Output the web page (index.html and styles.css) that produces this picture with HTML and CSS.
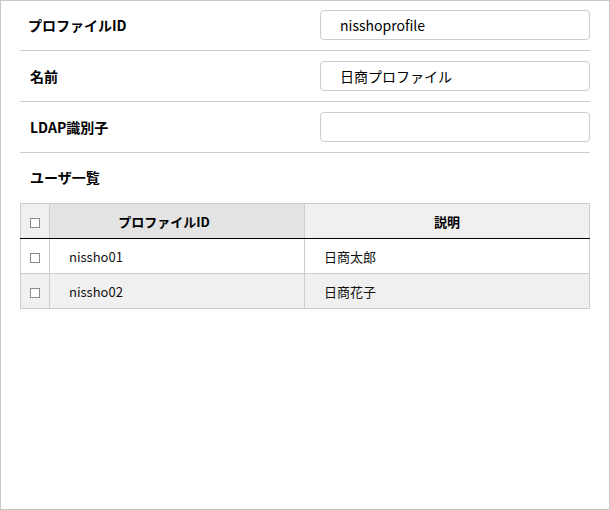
FILE: index.html
```html
<!DOCTYPE html>
<html lang="ja">
<head>
<meta charset="utf-8">
<link rel="stylesheet" href="styles.css">
</head>
<body>
<div class="panel">
  <div class="form">
    <div class="row">
      <div class="label">プロファイルID</div>
      <div class="field"><div class="input">nisshoprofile</div></div>
    </div>
    <div class="row">
      <div class="label">名前</div>
      <div class="field"><div class="input">日商プロファイル</div></div>
    </div>
    <div class="row">
      <div class="label">LDAP識別子</div>
      <div class="field"><div class="input"></div></div>
    </div>
  </div>
  <div class="section-title">ユーザ一覧</div>
  <table class="grid">
    <thead>
      <tr>
        <th class="col-check"><span class="cb"></span></th>
        <th class="col-id sorted">プロファイルID</th>
        <th class="col-desc">説明</th>
      </tr>
    </thead>
    <tbody>
      <tr>
        <td class="col-check"><span class="cb"></span></td>
        <td class="cell">nissho01</td>
        <td class="cell">日商太郎</td>
      </tr>
      <tr class="alt">
        <td class="col-check"><span class="cb"></span></td>
        <td class="cell">nissho02</td>
        <td class="cell">日商花子</td>
      </tr>
    </tbody>
  </table>
</div>
</body>
</html>
```

FILE: styles.css
```css
html, body {
  margin: 0;
  padding: 0;
  background: #fff;
}
body {
  font-family: "Noto Sans CJK JP", "DejaVu Sans", sans-serif;
  color: #000;
}
.panel {
  box-sizing: border-box;
  width: 610px;
  height: 510px;
  border: 1px solid #c8c8c8;
  padding: 0 19px;
}
.form {
  margin-top: -1px;
}
.row {
  display: flex;
  align-items: center;
  height: 50px;
  border-bottom: 1px solid #cccccc;
}
.label {
  flex: 0 0 300px;
  padding-left: 10px;
  font-size: 14px;
  font-weight: bold;
  box-sizing: border-box;
}
.row:first-child .label {
  padding-left: 8px;
}
.field {
  flex: 1;
}
.input {
  box-sizing: border-box;
  height: 30px;
  border: 1px solid #cccccc;
  border-radius: 4px;
  padding: 0 19px;
  font-size: 14px;
  line-height: 28px;
  color: #000;
}
.section-title {
  height: 50px;
  line-height: 49px;
  padding-left: 10px;
  font-size: 14px;
  font-weight: bold;
}
.grid {
  width: 570px;
  border-collapse: collapse;
  font-size: 13px;
  table-layout: fixed;
}
.grid th, .grid td {
  border: 1px solid #cccccc;
  height: 35px;
  padding: 0;
  box-sizing: border-box;
}
.grid thead th {
  background: #f0f0f0;
  border-bottom: 1px solid #000;
  font-weight: bold;
  text-align: center;
}
.grid thead th.sorted {
  background: #e3e3e3;
  padding-right: 26px;
}
.col-check {
  width: 29px;
  text-align: center;
}
.col-id {
  width: 255px;
}
.cell {
  padding-left: 19px !important;
  color: #111;
}
.grid tbody tr.alt td {
  background: #f0f0f0;
}
.cb {
  display: inline-block;
  width: 8px;
  height: 8px;
  border: 1px solid #8a8a8a;
  background: #fff;
  vertical-align: middle;
}
```
